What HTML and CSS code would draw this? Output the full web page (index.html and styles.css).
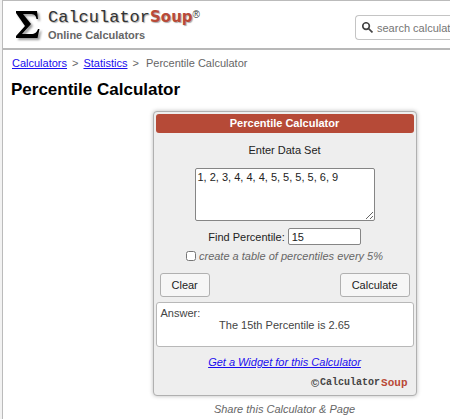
FILE: index.html
```html
<!DOCTYPE html>
<html lang="en">
	<head>
		<meta charset="UTF-8">
		<title>Percentile Calculator</title>
		<link rel="stylesheet" href="styles.css">
	</head>
	<body>
		<div class="page">
			<header class="header">
				<a class="logo" href="#">
					<svg class="sigma" viewBox="0 0 26 32" aria-hidden="true">
						<path d="M1 2H22L23 10H21.500C21 6 19 5 15 5H8L16 15L7 25H16C20 25 22 23 23 20H24.500L22.500 29H1V27L10 17L1 4Z"/>
					</svg>
					<span class="brand">
						<span class="name"><span class="calc">Calculator</span><span class="soup">Soup</span><span class="reg">®</span></span>
						<span class="tagline">Online Calculators</span>
					</span>
				</a>
				<form class="search">
					<svg class="glass" viewBox="0 0 10 10" aria-hidden="true">
						<circle cx="3.700" cy="3.700" r="3"/>
						<path d="M6 6L9.500 9.500"/>
					</svg>
					<input type="text" placeholder="search calculators" aria-label="search calculators">
				</form>
			</header>
			<nav class="crumbs">
				<a href="#">Calculators</a>
				<span>&gt;</span>
				<a href="#">Statistics</a>
				<span>&gt;</span>
				<span class="current">Percentile Calculator</span>
			</nav>
			<h1>Percentile Calculator</h1>
			<main>
				<form class="calculator">
					<h2>Percentile Calculator</h2>
					<label for="data">Enter Data Set</label>
					<textarea id="data" class="data">1, 2, 3, 4, 4, 4, 5, 5, 5, 5, 6, 9</textarea>
					<div class="find">
						<label for="percentile">Find Percentile:</label>
						<input type="text" id="percentile" value="15">
					</div>
					<div class="option">
						<input type="checkbox" id="table">
						<label for="table">create a table of percentiles every 5%</label>
					</div>
					<div class="buttons">
						<button type="reset">Clear</button>
						<button type="button">Calculate</button>
					</div>
					<div class="answer">
						<div>Answer:</div>
						<p>The 15th Percentile is 2.65</p>
					</div>
					<a class="widget" href="#">Get a Widget for this Calculator</a>
					<div class="copyright">©<span>Calculator</span><span class="small-soup">Soup</span></div>
				</form>
				<p class="share">Share this Calculator &amp; Page</p>
			</main>
		</div>
	</body>
</html>
```

FILE: styles.css
```css
* {
	box-sizing: border-box;
}
body {
	margin: 0;
	padding-left: 2px;
	background: #f2f2f2;
	color: #222;
	font: 11px/14px "Liberation Sans", Arial, sans-serif;
}
input, textarea, button {
	font: inherit;
	color: inherit;
}
a {
	color: #1a0dee;
}
.page {
	min-height: 100vh;
	border: 1px solid #bbb;
	border-width: 1px 0 0 1px;
	background: #fff;
}

/* header */
.header {
	display: flex;
	justify-content: space-between;
	height: 49px;
	padding: 8px 0 0 12px;
	border-bottom: 2px solid #b8b8b8;
	overflow: hidden;
}
.logo {
	display: flex;
	gap: 7px;
	color: #333;
	text-decoration: none;
}
.sigma {
	width: 26px;
	height: 32px;
	fill: #000;
	filter: drop-shadow(2px 2px 1px #999);
}
.brand, .name {
	display: flex;
}
.brand {
	flex-direction: column;
}
.name {
	height: 19px;
	line-height: 18px;
	text-shadow: 1px 1px 1px #aaa;
}
.calc {
	font-family: "Courier New", "Liberation Mono", monospace;
	font-size: 17px;
}
.soup {
	color: #b94a38;
	font: bold 15px/16px "DejaVu Sans", sans-serif;
}
.reg {
	font-size: 10px;
	line-height: 12px;
	text-shadow: none;
}
.tagline {
	color: #666;
	font-weight: bold;
}
.search {
	display: flex;
	flex: none;
	align-items: center;
	gap: 4px;
	width: 95px;
	height: 25px;
	margin-top: 6px;
	padding-left: 6px;
	border: 1px solid #c4c4c4;
	border-right: 0;
	border-radius: 4px 0 0 4px;
}
.glass {
	flex: none;
	width: 11px;
	height: 11px;
	fill: none;
	stroke: #444;
	stroke-width: 1.5;
}
.search input {
	flex: 1;
	min-width: 0;
	padding: 0;
	border: 0;
	outline: 0;
}
.search input::placeholder {
	color: #757575;
}

/* breadcrumbs and title */
.crumbs {
	display: flex;
	gap: 5px;
	padding: 6px 9px 0;
	color: #666;
}
.current {
	padding-left: 2px;
}
h1 {
	margin: 9px 8px 10px;
	color: #000;
	font-size: 17px;
	line-height: 22px;
}

/* calculator */
main {
	padding-left: 116px;
}
.calculator {
	display: flex;
	flex-direction: column;
	align-items: center;
	max-width: 264px;
	margin: 0 auto;
	padding: 2px;
	border: 1px solid #b0b0b0;
	border-radius: 4px;
	background: #eee;
	box-shadow: 0 0 4px #bbb;
}
h2 {
	align-self: stretch;
	margin: 0 0 10px;
	border-radius: 3px;
	background: #b64a37;
	color: #fff;
	font-size: 11px;
	line-height: 19px;
	text-align: center;
}
.data {
	width: 180px;
	height: 53px;
	margin: 11px 0 7px;
	padding: 1px 2px;
	border: 1px solid #858585;
	border-radius: 2px;
	background: #fff;
}
.find, .option {
	display: flex;
	align-items: center;
	gap: 3px;
}
.find input {
	width: 73px;
	height: 17px;
	padding: 0 3px;
	border: 1px solid #858585;
	border-radius: 2px;
}
.option {
	margin: 4px 0 10px;
	color: #666;
	font-style: italic;
}
.option input {
	width: 10px;
	height: 10px;
	margin: 0;
}
.buttons {
	display: flex;
	justify-content: space-between;
	align-self: stretch;
	padding: 0 4px;
}
button {
	height: 24px;
	padding: 0 11px;
	border: 1px solid #b0b0b0;
	border-radius: 3px;
	background: #f6f6f6;
}
.answer {
	align-self: stretch;
	height: 45px;
	margin: 5px 0 8px;
	padding: 4px;
	border: 1px solid #b8b8b8;
	border-radius: 3px;
	background: #fff;
	color: #444;
	line-height: 12px;
}
.answer p {
	margin: 0;
	text-align: center;
}
.widget {
	font-style: italic;
}
.copyright {
	display: flex;
	align-self: flex-end;
	gap: 1px;
	margin: 7px 6px 3px;
	color: #444;
	font-weight: bold;
}
.copyright span {
	font-family: "Courier New", "Liberation Mono", monospace;
	font-size: 10px;
}
.copyright .small-soup {
	color: #b94a38;
	font-size: 11px;
}
.share {
	margin: 6px 0 0;
	color: #666;
	font-style: italic;
	text-align: center;
}
```
